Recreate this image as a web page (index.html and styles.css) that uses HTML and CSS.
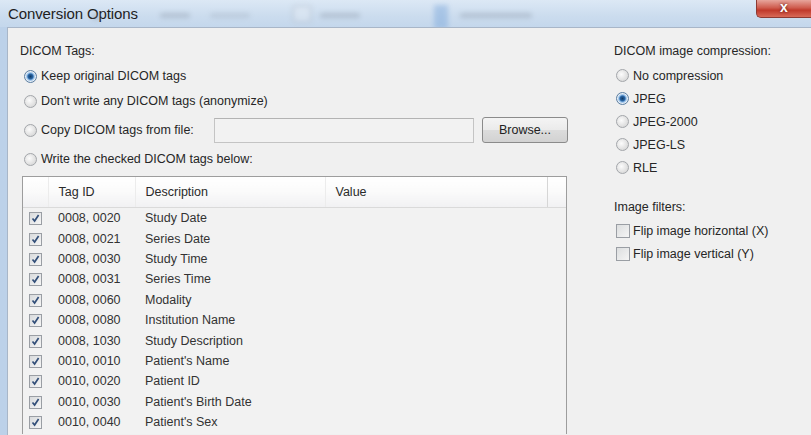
FILE: index.html
```html
<!DOCTYPE html>
<html lang="en">
<head>
    <meta charset="UTF-8">
    <title>Conversion Options</title>
    <link rel="stylesheet" href="styles.css">
</head>
<body>
    <div class="window">
        <div class="titlebar">
            <span class="title">Conversion Options</span>
            <span class="ghost g-dot"></span>
            <span class="ghost g-text g1"></span>
            <span class="ghost g-text g2"></span>
            <span class="ghost g-box"></span>
            <span class="ghost g-text g3"></span>
            <span class="ghost g-blue"></span>
            <span class="ghost g-text g4"></span>
            <span class="close">x</span>
        </div>
        <div class="frame">
            <div class="client">
                <div class="left">
                    <div class="label">DICOM Tags:</div>
                    <div class="opt row1"><span class="radio checked"></span>Keep original DICOM tags</div>
                    <div class="opt row2"><span class="radio"></span>Don't write any DICOM tags (anonymize)</div>
                    <div class="opt row3">
                        <span class="file-label"><span class="radio"></span>Copy DICOM tags from file:</span>
                        <span class="textbox"></span>
                        <span class="btn">Browse...</span>
                    </div>
                    <div class="opt row4"><span class="radio"></span>Write the checked DICOM tags below:</div>
                    <div class="grid-box">
                        <table class="grid">
                            <colgroup>
                                <col class="c-chk">
                                <col class="c-id">
                                <col class="c-desc">
                                <col class="c-val">
                                <col class="c-end">
                            </colgroup>
                            <thead>
                                <tr>
                                    <th></th>
                                    <th>Tag ID</th>
                                    <th>Description</th>
                                    <th>Value</th>
                                    <th></th>
                                </tr>
                            </thead>
                            <tbody>
                                <tr><td><span class="check on"></span></td><td>0008, 0020</td><td>Study Date</td><td></td><td></td></tr>
                                <tr><td><span class="check on"></span></td><td>0008, 0021</td><td>Series Date</td><td></td><td></td></tr>
                                <tr><td><span class="check on"></span></td><td>0008, 0030</td><td>Study Time</td><td></td><td></td></tr>
                                <tr><td><span class="check on"></span></td><td>0008, 0031</td><td>Series Time</td><td></td><td></td></tr>
                                <tr><td><span class="check on"></span></td><td>0008, 0060</td><td>Modality</td><td></td><td></td></tr>
                                <tr><td><span class="check on"></span></td><td>0008, 0080</td><td>Institution Name</td><td></td><td></td></tr>
                                <tr><td><span class="check on"></span></td><td>0008, 1030</td><td>Study Description</td><td></td><td></td></tr>
                                <tr><td><span class="check on"></span></td><td>0010, 0010</td><td>Patient's Name</td><td></td><td></td></tr>
                                <tr><td><span class="check on"></span></td><td>0010, 0020</td><td>Patient ID</td><td></td><td></td></tr>
                                <tr><td><span class="check on"></span></td><td>0010, 0030</td><td>Patient's Birth Date</td><td></td><td></td></tr>
                                <tr><td><span class="check on"></span></td><td>0010, 0040</td><td>Patient's Sex</td><td></td><td></td></tr>
                                <tr><td><span class="check on"></span></td><td></td><td></td><td></td><td></td></tr>
                            </tbody>
                        </table>
                    </div>
                </div>
                <div class="right">
                    <div class="label">DICOM image compression:</div>
                    <div class="ropt first"><span class="radio"></span>No compression</div>
                    <div class="ropt"><span class="radio checked"></span>JPEG</div>
                    <div class="ropt"><span class="radio"></span>JPEG-2000</div>
                    <div class="ropt"><span class="radio"></span>JPEG-LS</div>
                    <div class="ropt"><span class="radio"></span>RLE</div>
                    <div class="label filters">Image filters:</div>
                    <div class="ropt cfirst"><span class="check"></span>Flip image horizontal (X)</div>
                    <div class="ropt"><span class="check"></span>Flip image vertical (Y)</div>
                </div>
            </div>
        </div>
    </div>
</body>
</html>
```

FILE: styles.css
```css
html, body {
    margin: 0;
    padding: 0;
}

body {
    width: 811px;
    height: 435px;
    overflow: hidden;
    font-family: "Liberation Sans", Arial, sans-serif;
    font-size: 12.5px;
    color: #262626;
}

.window {
    display: flex;
    flex-direction: column;
    height: 435px;
    overflow: hidden;
}

.titlebar {
    display: flex;
    align-items: center;
    height: 27px;
    flex: none;
    background: linear-gradient(#dce8f5, #cbdcee 60%, #c4d7ec);
    overflow: hidden;
}

.title {
    margin-left: 8px;
    font-size: 15px;
    color: #1e1e1e;
    letter-spacing: -0.1px;
}

.ghost {
    flex: none;
    filter: blur(2.5px);
    opacity: 0.4;
}

.g-dot {
    width: 8px;
    height: 6px;
    margin-left: -46px;
    margin-top: 6px;
    background: #8a96a4;
    border-radius: 3px;
}

.g-text {
    height: 5px;
    margin-top: 4px;
    background: #8c98a8;
    border-radius: 2px;
}

.g1 { width: 30px; margin-left: 60px; }
.g2 { width: 40px; margin-left: 20px; opacity: 0.25; }

.g-box {
    width: 16px;
    height: 14px;
    margin-left: 42px;
    border: 2px solid #a9b3c0;
    background: #e8eef6;
    border-radius: 3px;
}

.g3 { width: 40px; margin-left: 8px; }

.g-blue {
    width: 14px;
    height: 24px;
    margin-left: 74px;
    margin-top: 6px;
    background: #6f9fd8;
}

.g4 { width: 72px; margin-left: 12px; }

.close {
    margin-left: auto;
    align-self: flex-start;
    width: 54px;
    height: 17px;
    line-height: 15px;
    text-align: center;
    color: #fff;
    font-weight: bold;
    font-size: 14px;
    background: linear-gradient(#e7a59c, #cf5d4f 45%, #c0392b 60%, #d86a58);
    border: 1px solid #8d3a33;
    border-top: 0;
    border-right: 0;
    border-radius: 0 0 0 5px;
    text-shadow: 0 0 3px #5a1a12;
}

.frame {
    flex: 1;
    display: flex;
    min-height: 0;
    padding-left: 7px;
    background: linear-gradient(90deg, #bcd1e9, #c8daee);
}

.client {
    flex: 1;
    display: flex;
    background: #f0f0f0;
    border-top: 1px solid #a8b6c8;
    border-left: 1px solid #a8b6c8;
    padding: 13px 0 0 12px;
    overflow: hidden;
}

.label {
    height: 20px;
    line-height: 20px;
}

.left {
    width: 548px;
    flex: none;
}

.opt {
    display: flex;
    align-items: center;
    padding-left: 4px;
}

.row1 { height: 26px; margin-top: 2px; }
.row2 { height: 24px; }
.row3 { height: 34px; }
.row4 { height: 24px; }

.radio {
    display: inline-block;
    box-sizing: border-box;
    width: 13px;
    height: 13px;
    margin-right: 4px;
    border-radius: 50%;
    border: 1px solid #a3a6aa;
    background: radial-gradient(circle at 40% 40%, #fcfcfc, #dcdcdc 70%, #cfd0d2);
    flex: none;
}

.radio.checked {
    background: radial-gradient(circle, #0f3a66 0, #2a66a6 2.5px, #8fbbe6 3.6px, #e6eef6 5px, #d6dbe0 6px);
    border-color: #5b7ea2;
}

.file-label {
    display: flex;
    align-items: center;
    width: 190px;
}

.textbox {
    box-sizing: border-box;
    width: 260px;
    height: 25px;
    background: #f2f2f2;
    border: 1px solid #c4c4c4;
    border-top-color: #b3b3b3;
}

.btn {
    box-sizing: border-box;
    width: 86px;
    height: 26px;
    margin-left: 8px;
    line-height: 24px;
    text-align: center;
    border: 1px solid #8b8b8b;
    border-radius: 3px;
    background: linear-gradient(#f4f4f4, #ebebeb 48%, #dcdcdc 52%, #d2d2d2);
    color: #222;
}

.grid-box {
    margin: 5px 0 0 2px;
    width: 545px;
    height: 258px;
    box-sizing: border-box;
    border: 1px solid #9d9d9d;
    border-bottom: 0;
    background: #f2f2f2;
    overflow: hidden;
}

.grid {
    width: 543px;
    table-layout: fixed;
    border-collapse: collapse;
}

.c-chk { width: 25px; }
.c-id { width: 87px; }
.c-desc { width: 190px; }
.c-val { width: 222px; }
.c-end { width: 19px; }

.grid th {
    height: 30px;
    padding: 0 0 0 10px;
    text-align: left;
    font-weight: normal;
    color: #2a2a2a;
    background: linear-gradient(#ffffff, #fafafa 50%, #f1f1f3);
    border-bottom: 1px solid #dadada;
    border-right: 1px solid #ececec;
}

.grid th:first-child {
    padding: 0;
}

.grid th:nth-child(4) {
    border-right-color: #d6d6d6;
}

.grid th:last-child {
    border-right: 0;
}

.grid td {
    height: 20.4px;
    padding: 0 0 0 10px;
    white-space: nowrap;
    color: #333;
}

.grid td:first-child {
    padding: 0 0 0 6px;
}

.check {
    display: inline-block;
    box-sizing: border-box;
    width: 13px;
    height: 13px;
    vertical-align: middle;
    border: 1px solid #9a9ea4;
    background: linear-gradient(135deg, #dcdedf, #f5f5f5);
    flex: none;
}

.check.on {
    background: url("data:image/svg+xml,%3Csvg xmlns='http://www.w3.org/2000/svg' width='11' height='11'%3E%3Cpath d='M2.5 5.5 L4.6 8 L8.6 2' fill='none' stroke='%23324e78' stroke-width='1.7'/%3E%3C/svg%3E") center no-repeat, linear-gradient(135deg, #d8dadc, #f6f6f6);
}

.right {
    margin-left: 46px;
}

.ropt {
    display: flex;
    align-items: center;
    height: 23px;
    padding-left: 2px;
}

.ropt.first {
    margin-top: 3px;
}

.ropt .check {
    width: 14px;
    height: 14px;
    margin-right: 3px;
}

.filters {
    margin-top: 18px;
}

.ropt.cfirst {
    margin-top: 2px;
}
```
